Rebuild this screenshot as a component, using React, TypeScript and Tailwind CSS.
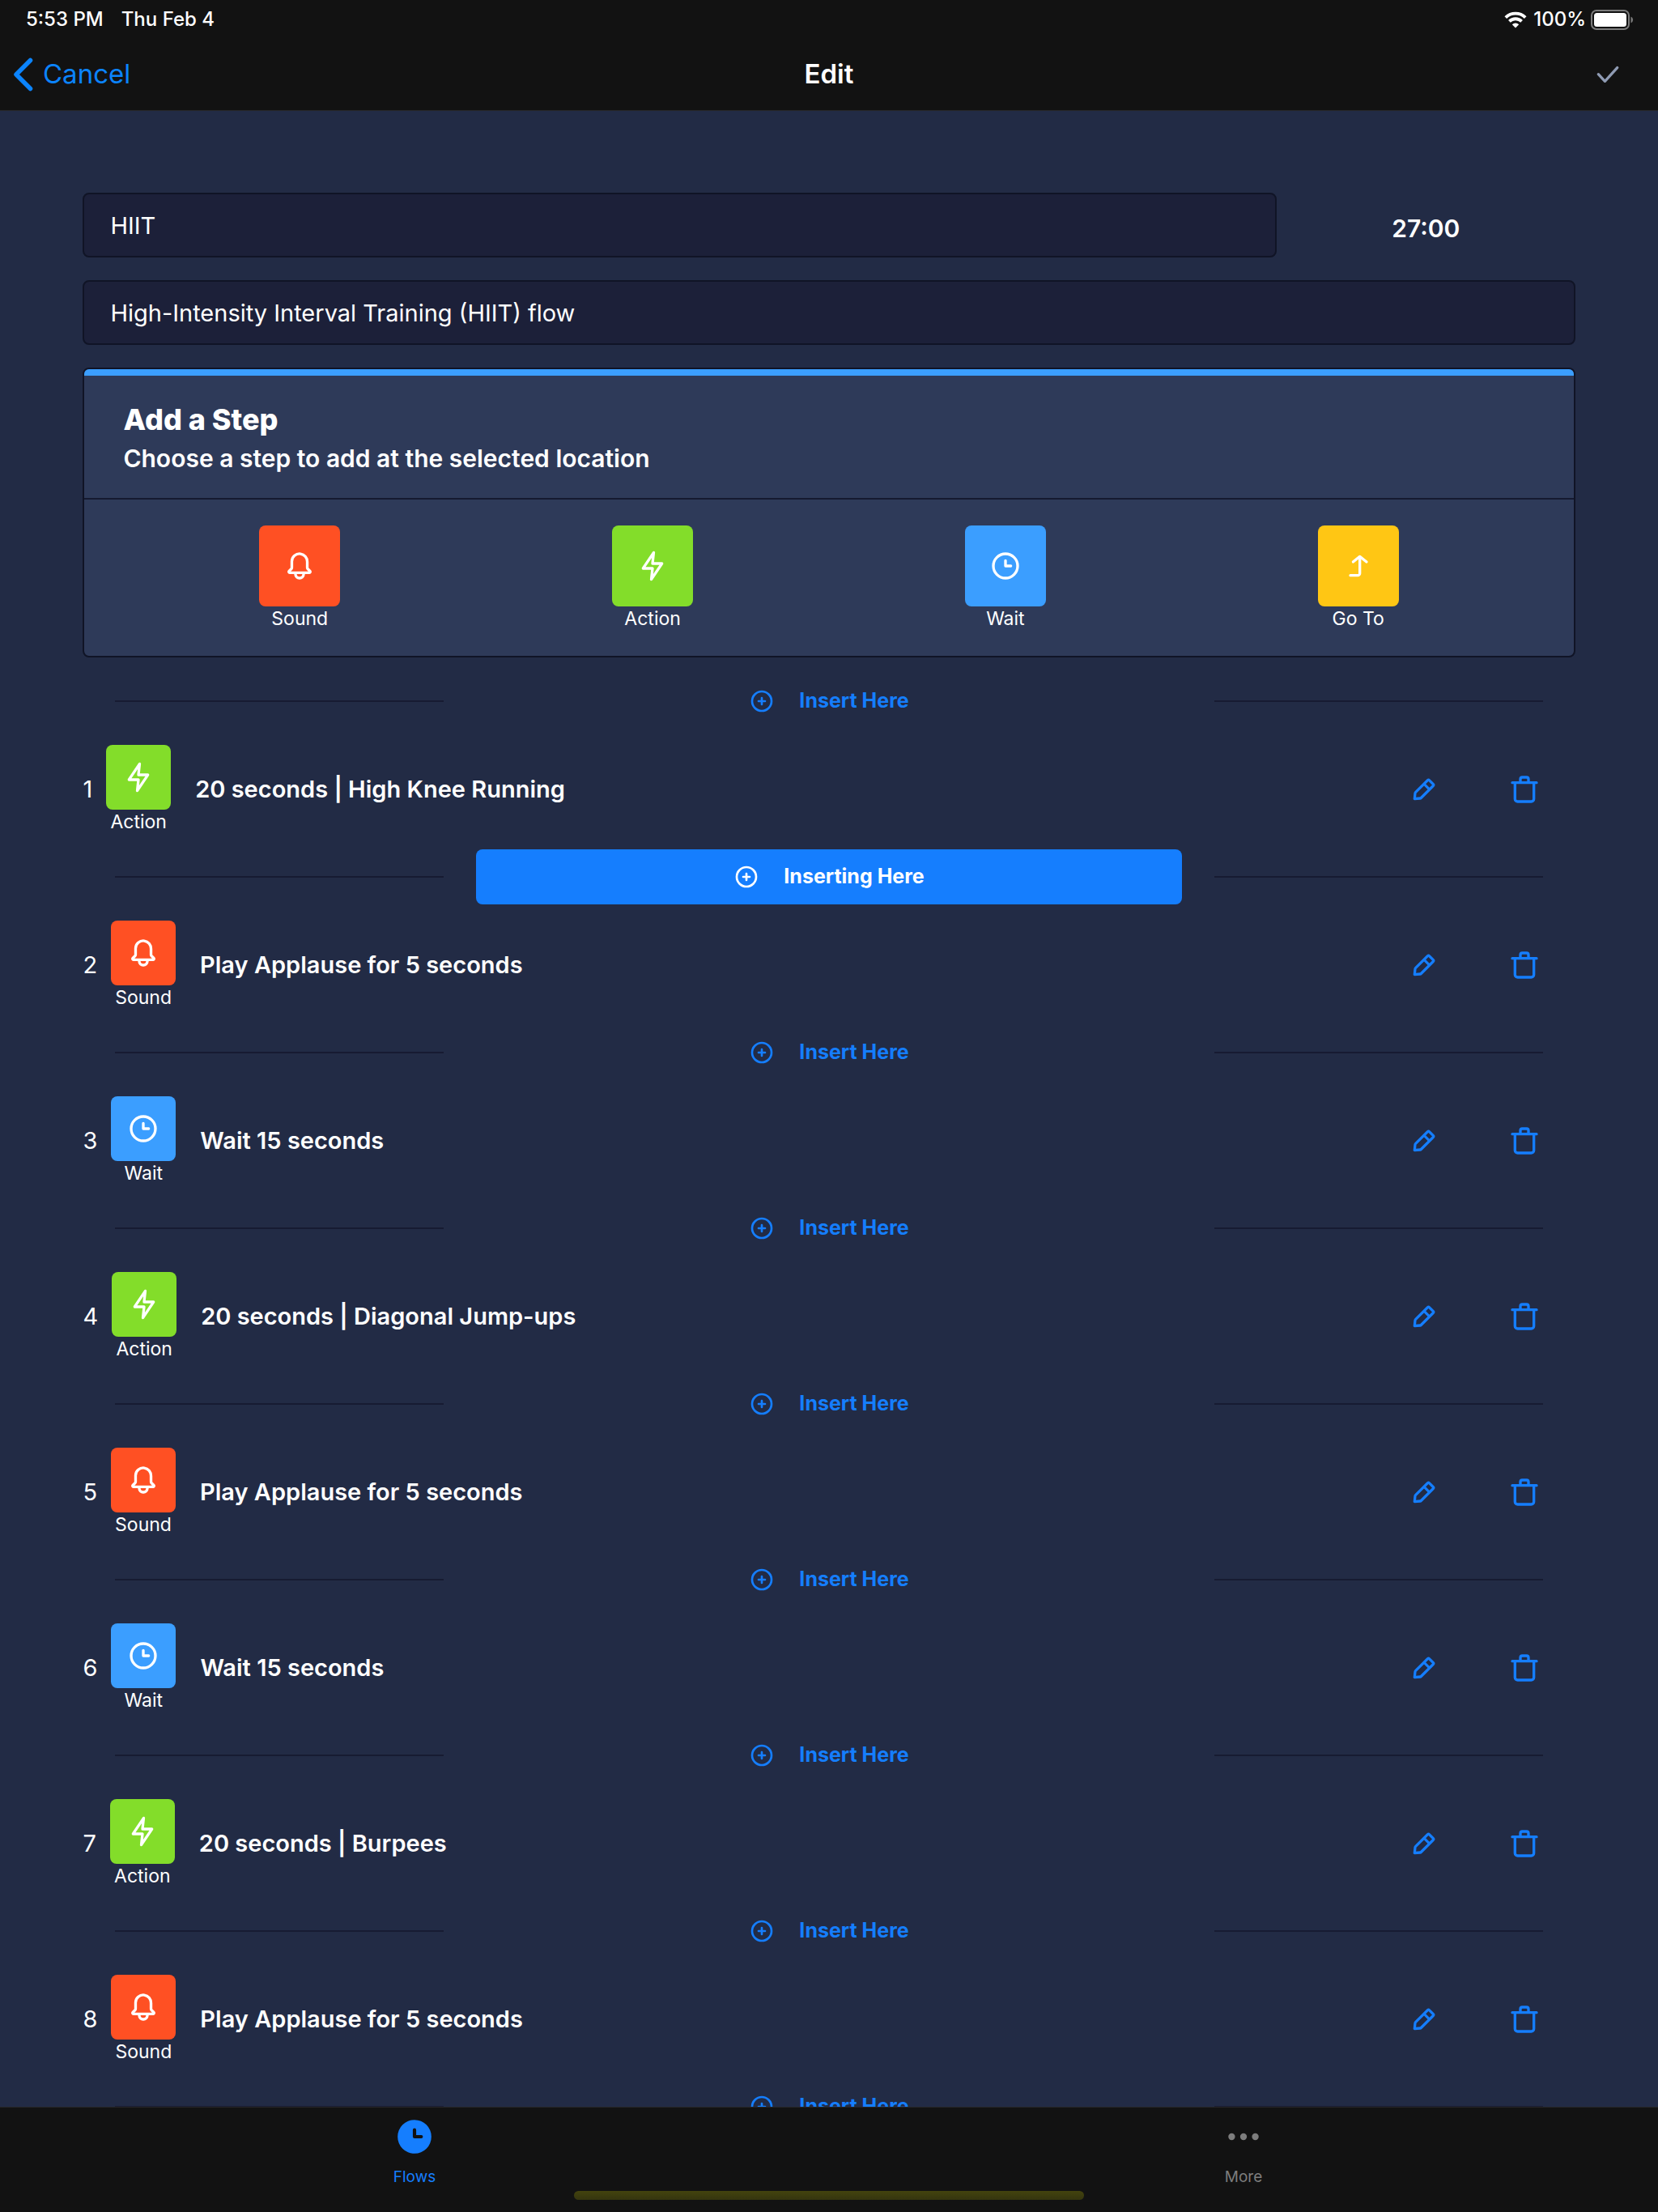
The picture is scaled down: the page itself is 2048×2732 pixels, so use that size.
import React from "react";

type Kind = "Sound" | "Action" | "Wait" | "Go To";

const CIRCLE = "M12 2a10 10 0 1 0 10 10A10 10 0 0 0 12 2zm0 18a8 8 0 1 1 8-8 8 8 0 0 1-8 8z";

const PATHS = {
  bell: "M20.52 15.21l-1.8-1.81V8.94a6.86 6.86 0 0 0-5.82-6.88 6.74 6.74 0 0 0-7.62 6.67v4.67l-1.8 1.81A1.64 1.64 0 0 0 4.64 18H8v.34A3.84 3.84 0 0 0 12 22a3.84 3.84 0 0 0 4-3.66V18h3.36a1.64 1.64 0 0 0 1.16-2.79zM14 18.34A1.88 1.88 0 0 1 12 20a1.88 1.88 0 0 1-2-1.66V18h4zM5.51 16l1.18-1.18a2 2 0 0 0 .59-1.42V8.73A4.73 4.73 0 0 1 8.9 5.17 4.67 4.67 0 0 1 12.64 4a4.86 4.86 0 0 1 4.08 4.9v4.5a2 2 0 0 0 .58 1.42L18.49 16z",
  flash: "M11.11 23a1 1 0 0 1-.34-.06 1 1 0 0 1-.65-1.05l.77-7.09H5a1 1 0 0 1-.83-1.56l7.89-11.8a1 1 0 0 1 1.17-.38 1 1 0 0 1 .65 1l-.77 7.14H19a1 1 0 0 1 .83 1.56l-7.89 11.8a1 1 0 0 1-.83.44zM6.87 12.8H12a1 1 0 0 1 .74.33 1 1 0 0 1 .25.78l-.45 4.15 4.59-6.86H12a1 1 0 0 1-1-1.11l.45-4.15z",
  clock: CIRCLE + "M16 11h-3V8a1 1 0 0 0-2 0v4a1 1 0 0 0 1 1h4a1 1 0 0 0 0-2z",
  clockFilled: "M12 2a10 10 0 1 0 10 10A10 10 0 0 0 12 2zm4 11h-4a1 1 0 0 1-1-1V8a1 1 0 0 1 2 0v3h3a1 1 0 0 1 0 2z",
  cornerUp: "M18.62 8.22l-5-4a1 1 0 0 0-1.24 0l-5 4a1 1 0 0 0 1.24 1.56L12 7.08V17.5a.5.5 0 0 1-.5.5H6a1 1 0 0 0 0 2h5.5a2.5 2.5 0 0 0 2.5-2.5V7.08l3.38 2.7A1 1 0 0 0 18 10a1 1 0 0 0 .62-1.78z",
  edit: "M19.4 7.34L16.66 4.6A2 2 0 0 0 14 4.53l-9 9a2 2 0 0 0-.57 1.21L4 18.91a1 1 0 0 0 .29.8A1 1 0 0 0 5 20h.09l4.17-.38a2 2 0 0 0 1.21-.57l9-9a1.92 1.92 0 0 0-.07-2.71zM9.08 17.62l-3 .28.27-3L12 9.32l2.7 2.7zM16 10.68L13.32 8l1.95-2L18 8.73z",
  trash: "M21 6h-5V4.33A2.42 2.42 0 0 0 13.5 2h-3A2.42 2.42 0 0 0 8 4.33V6H3a1 1 0 0 0 0 2h1v11a3 3 0 0 0 3 3h10a3 3 0 0 0 3-3V8h1a1 1 0 0 0 0-2zM10 4.33c0-.16.21-.33.5-.33h3c.29 0 .5.17.5.33V6h-4zM18 19a1 1 0 0 1-1 1H7a1 1 0 0 1-1-1V8h12z",
  plusCircle: CIRCLE + "M15 11h-2V9a1 1 0 0 0-2 0v2H9a1 1 0 0 0 0 2h2v2a1 1 0 0 0 2 0v-2h2a1 1 0 0 0 0-2z",
  check: "M9.86 18a1 1 0 0 1-.73-.32l-4.86-5.17a1 1 0 1 1 1.46-1.37l4.12 4.39 8.41-9.2a1 1 0 1 1 1.48 1.34l-9.14 10a1 1 0 0 1-.73.33z",
  more: "M3 12a2 2 0 1 0 4 0 2 2 0 1 0-4 0zM10 12a2 2 0 1 0 4 0 2 2 0 1 0-4 0zM17 12a2 2 0 1 0 4 0 2 2 0 1 0-4 0z",
};

function Icon({ name, className }: { name: keyof typeof PATHS; className: string }) {
  return (
    <svg viewBox="0 0 24 24" fill="currentColor" aria-hidden="true" className={className}>
      <path d={PATHS[name]} />
    </svg>
  );
}

const KINDS: Record<Kind, { icon: keyof typeof PATHS; color: string }> = {
  Sound: { icon: "bell", color: "bg-[#ff5023]" },
  Action: { icon: "flash", color: "bg-[#83dd2a]" },
  Wait: { icon: "clock", color: "bg-[#3b9eff]" },
  "Go To": { icon: "cornerUp", color: "bg-[#ffc614]" },
};

const STEPS: { kind: Kind; title: string }[] = [
  { kind: "Action", title: "20 seconds | High Knee Running" },
  { kind: "Sound", title: "Play Applause for 5 seconds" },
  { kind: "Wait", title: "Wait 15 seconds" },
  { kind: "Action", title: "20 seconds | Diagonal Jump-ups" },
  { kind: "Sound", title: "Play Applause for 5 seconds" },
  { kind: "Wait", title: "Wait 15 seconds" },
  { kind: "Action", title: "20 seconds | Burpees" },
  { kind: "Sound", title: "Play Applause for 5 seconds" },
];

function StatusBar() {
  return (
    <div className="flex h-12 items-center justify-between pr-[30px] pl-8 text-2xl font-medium">
      <div className="flex gap-[22px]">
        <span>5:53 PM</span>
        <span>Thu Feb 4</span>
      </div>
      <div className="flex items-center">
        <svg viewBox="0 0 28 21" className="mr-2 h-[21px] w-7" aria-label="Wi-Fi">
          <path d="M1.8 7.6a17.5 17.5 0 0 1 24.4 0" fill="none" stroke="#fff" strokeWidth="3.8" />
          <path d="M6.4 12.4a10.8 10.8 0 0 1 15.2 0" fill="none" stroke="#fff" strokeWidth="3.8" />
          <path d="M14 20.5l-4.2-4.3a6 6 0 0 1 8.4 0z" fill="#fff" />
        </svg>
        <span>100%</span>
        <svg viewBox="0 0 53 25" className="ml-1.5 h-[25px] w-[53px]" aria-label="Battery full">
          <rect x="1" y="1" width="46" height="23" rx="6" fill="none" stroke="#7c7c7c" strokeWidth="2" />
          <rect x="4" y="4" width="40" height="17" rx="3.5" fill="#fff" />
          <path d="M49.5 8.5a4.4 4.4 0 0 1 0 8z" fill="#7c7c7c" />
        </svg>
      </div>
    </div>
  );
}

function NavBar() {
  return (
    <div className="grid h-[88px] grid-cols-3 items-center text-[33px]">
      <button type="button" className="flex items-center gap-3 justify-self-start pl-4 text-[#0b84ff]">
        <svg viewBox="0 0 25 42" className="h-[42px] w-[25px]" aria-hidden="true">
          <path d="M21.5 3.5L4 21l17.5 17.5" fill="none" stroke="currentColor" strokeWidth="5.5" strokeLinecap="round" strokeLinejoin="round" />
        </svg>
        <span>Cancel</span>
      </button>
      <h1 className="text-center font-semibold">Edit</h1>
      <button type="button" aria-label="Save" className="justify-self-end pr-[42px] text-[#8f9bb3]">
        <Icon name="check" className="size-10" />
      </button>
    </div>
  );
}

function Tile({ kind, className }: { kind: Kind; className: string }) {
  return (
    <span className="flex flex-col items-center">
      <span className={`flex items-center justify-center rounded-lg ${KINDS[kind].color} ${className}`}>
        <Icon name={KINDS[kind].icon} className="size-10" />
      </span>
      <span className="pt-px text-[23px] leading-[29px]">{kind}</span>
    </span>
  );
}

function InsertRow({ active }: { active?: boolean }) {
  return (
    <div className="flex items-center gap-10 px-10">
      <div className="h-0.5 w-[23%] bg-[#171b32]" />
      <button
        type="button"
        className={`flex h-[68px] flex-1 items-center justify-center gap-[30px] rounded-lg text-[25px] font-bold ${
          active ? "bg-[#157efe] text-white" : "text-[#157efe]"
        }`}
      >
        <Icon name="plusCircle" className="size-8" />
        {active ? "Inserting Here" : "Insert Here"}
      </button>
      <div className="h-0.5 w-[23%] bg-[#171b32]" />
    </div>
  );
}

function StepRow({ index, kind, title }: { index: number; kind: Kind; title: string }) {
  return (
    <div className="flex items-center pt-5 pr-[43px] pb-[19px]">
      <span className="mr-[17px] text-[29px]">{index}</span>
      <Tile kind={kind} className="size-20" />
      <span className="ml-[30px] flex-1 text-[29px] font-semibold">{title}</span>
      <div className="flex gap-[84px] text-[#157efe]">
        <button type="button" aria-label={`Edit step ${index}`}>
          <Icon name="edit" className="size-10" />
        </button>
        <button type="button" aria-label={`Delete step ${index}`}>
          <Icon name="trash" className="size-10" />
        </button>
      </div>
    </div>
  );
}

const FIELD =
  "h-20 rounded-lg border-2 border-[#101426] bg-[#1c2039] px-8 text-[29px] text-white outline-none";

export default function App() {
  return (
    <div className="flex h-screen flex-col bg-[#222b45] font-['Inter',sans-serif] text-white">
      <header className="shrink-0 border-b border-[#272729] bg-[#121212]">
        <StatusBar />
        <NavBar />
      </header>

      <main className="min-h-0 flex-1 overflow-hidden px-[5%] pt-[101px]">
        <div className="flex items-center">
          <input aria-label="Flow name" defaultValue="HIIT" className={`w-4/5 ${FIELD}`} />
          <span className="flex-1 pt-2 text-center text-[30px] font-semibold">27:00</span>
        </div>
        <input
          aria-label="Flow description"
          defaultValue="High-Intensity Interval Training (HIIT) flow"
          className={`mt-7 block w-full ${FIELD}`}
        />

        <section className="mt-7 mb-5 overflow-hidden rounded-lg border-2 border-[#101426] bg-[#2e3a59]">
          <div className="h-2 bg-[#3b9eff]" />
          <div className="border-b-2 border-[#151a30] px-12 pt-[30px] pb-[27px]">
            <h2 className="text-4xl leading-12 font-extrabold">Add a Step</h2>
            <p className="mt-0.5 text-[30px] leading-11 font-semibold">
              Choose a step to add at the selected location
            </p>
          </div>
          <div className="grid grid-cols-4 px-12 pt-8 pb-[31px]">
            {(Object.keys(KINDS) as Kind[]).map((kind) => (
              <button key={kind} type="button" className="justify-self-center">
                <Tile kind={kind} className="size-25" />
              </button>
            ))}
          </div>
        </section>

        <InsertRow />
        {STEPS.map((step, i) => (
          <React.Fragment key={i}>
            <StepRow index={i + 1} kind={step.kind} title={step.title} />
            <InsertRow active={i === 0} />
          </React.Fragment>
        ))}
      </main>

      <footer className="shrink-0 border-t border-[#272729] bg-[#121212]">
        <nav className="grid grid-cols-2 pt-[11px] text-[19px] leading-6">
          <a href="#flows" className="flex flex-col items-center gap-[13px] text-[#157efe]">
            <Icon name="clockFilled" className="size-[50px]" />
            Flows
          </a>
          <a href="#more" className="flex flex-col items-center gap-[13px] text-[#7d7d7d]">
            <Icon name="more" className="size-[50px]" />
            More
          </a>
        </nav>
        <div className="mx-auto mt-[5px] mb-[15px] h-[11px] w-[630px] rounded-full bg-linear-to-b from-[#43430d] to-[#35350f]" />
      </footer>
    </div>
  );
}
